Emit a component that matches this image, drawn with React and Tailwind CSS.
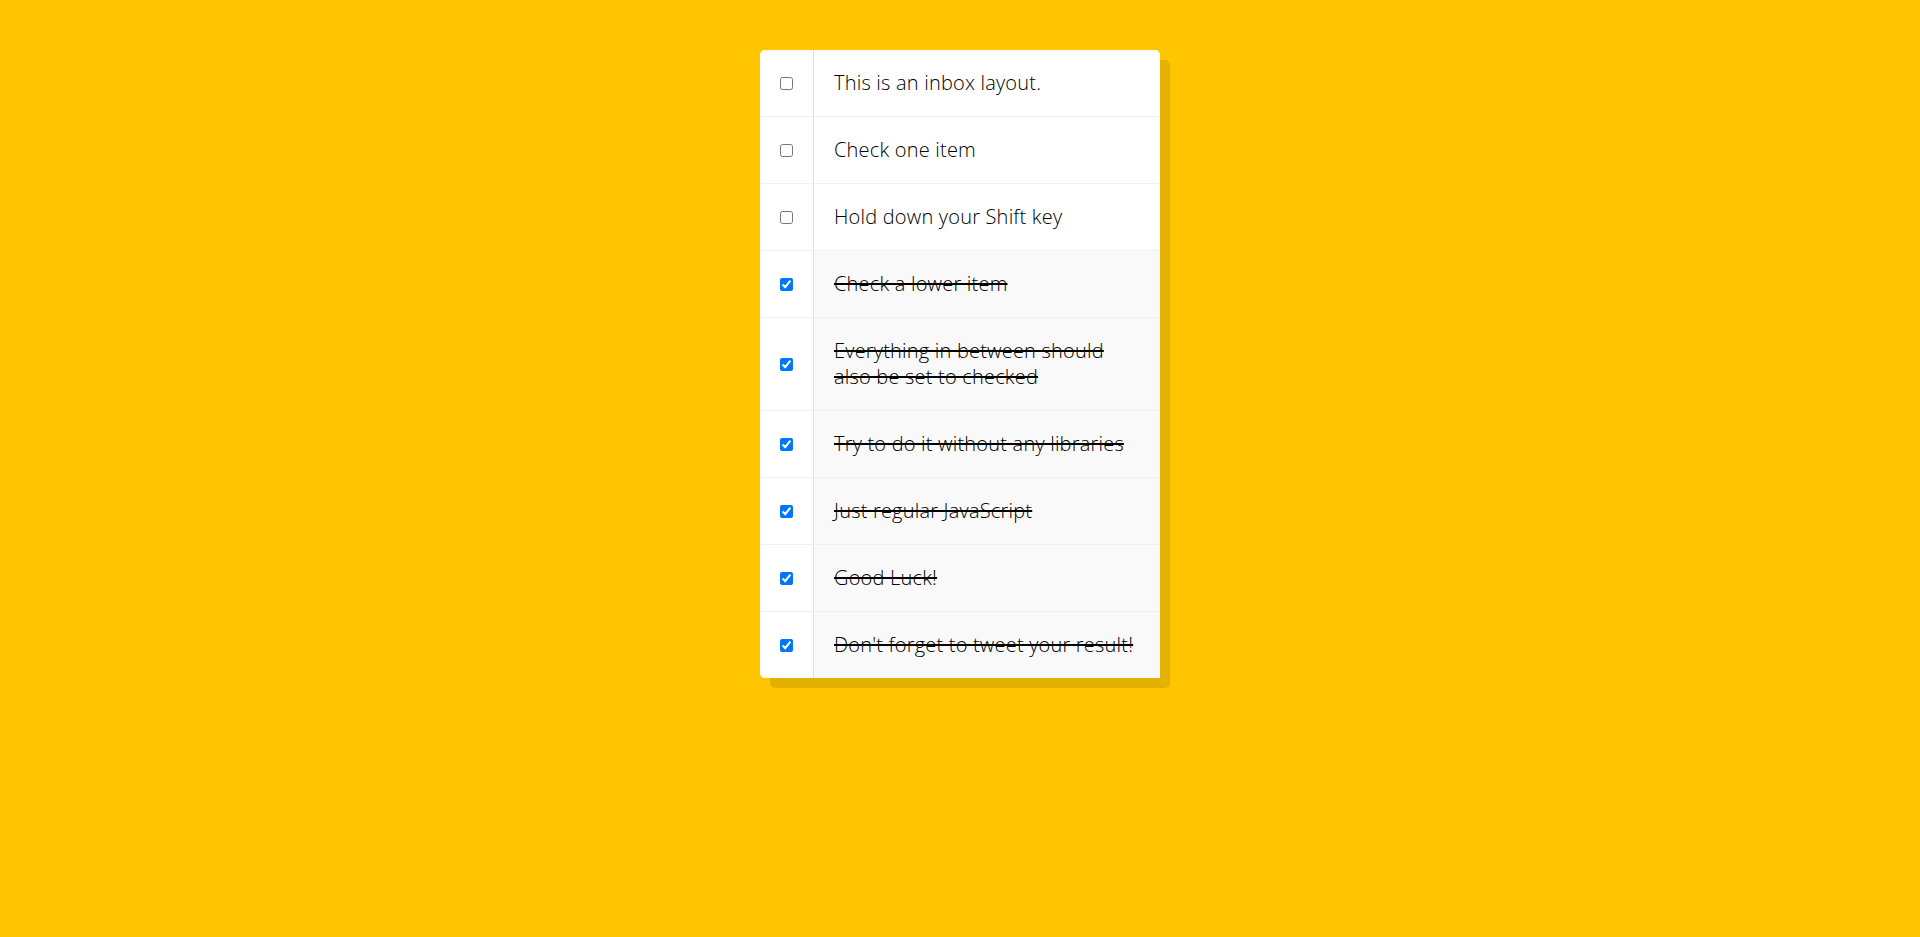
import { useState } from "react";

const items = [
  { text: "This is an inbox layout.", checked: false },
  { text: "Check one item", checked: false },
  { text: "Hold down your Shift key", checked: false },
  { text: "Check a lower item", checked: true },
  { text: "Everything in between should also be set to checked", checked: true },
  { text: "Try to do it without any libraries", checked: true },
  { text: "Just regular JavaScript", checked: true },
  { text: "Good Luck!", checked: true },
  { text: "Don't forget to tweet your result!", checked: true },
];

function App() {
  const [checked, setChecked] = useState(items.map((i) => i.checked));
  const [last, setLast] = useState(null);

  const toggle = (idx, e) => {
    const value = e.target.checked;
    const next = [...checked];
    if (e.nativeEvent.shiftKey && value && last !== null) {
      const [a, b] = last < idx ? [last, idx] : [idx, last];
      for (let i = a; i <= b; i++) next[i] = true;
    } else {
      next[idx] = value;
    }
    setChecked(next);
    setLast(idx);
  };

  return (
    <div className="min-h-[937px] w-full bg-[#ffc600] pt-[50px]">
      <div className="mx-auto max-w-[400px] rounded-[5px] bg-white shadow-[10px_10px_0_rgba(0,0,0,0.1)]">
        {items.map((item, idx) => (
          <div
            key={idx}
            className="flex items-center border-b border-[#f1f1f1] last:border-b-0"
          >
            <input
              type="checkbox"
              checked={checked[idx]}
              onChange={(e) => toggle(idx, e)}
              className="m-5 h-[13px] w-[13px] shrink-0"
            />
            <p
              className={
                "m-0 flex-1 self-stretch border-l border-[#d1e2ff] p-5 text-[20px] leading-[26px] tracking-[0.2px] font-light text-black " +
                (checked[idx] ? "bg-[#f9f9f9] line-through" : "")
              }
              style={{ fontFamily: '"Open Sans", "Noto Sans", sans-serif' }}
            >
              {item.text}
            </p>
          </div>
        ))}
      </div>
    </div>
  );
}

export default App;
